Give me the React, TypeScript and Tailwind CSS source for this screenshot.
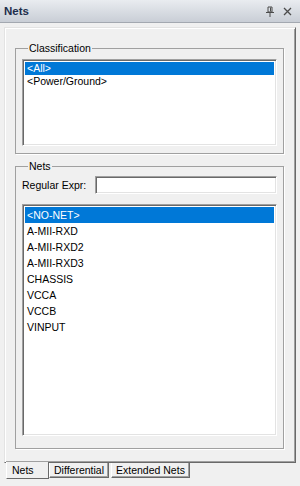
import React from 'react';

const classification = ['<All>', '<Power/Ground>'];
const nets = ['<NO-NET>', 'A-MII-RXD', 'A-MII-RXD2', 'A-MII-RXD3', 'CHASSIS', 'VCCA', 'VCCB', 'VINPUT'];

const sunken =
  'border border-t-[#a0a0a0] border-l-[#a0a0a0] border-r-white border-b-white shadow-[inset_1px_1px_0_#696969,inset_-1px_-1px_0_#e3e3e3] bg-white';

function PinIcon() {
  return (
    <svg width="10" height="11" viewBox="0 0 10 11" className="block">
      <path d="M3 1h4v5H3z" fill="none" stroke="#4b4b4b" strokeWidth="1" />
      <path d="M5.5 1.5v4" stroke="#4b4b4b" strokeWidth="1" />
      <path d="M1 6.5h8" stroke="#4b4b4b" strokeWidth="1" />
      <path d="M5 7v4" stroke="#4b4b4b" strokeWidth="1" />
    </svg>
  );
}

function CloseIcon() {
  return (
    <svg width="9" height="9" viewBox="0 0 9 9" className="block">
      <path d="M1 1l7 7M8 1L1 8" stroke="#4b4b4b" strokeWidth="1.3" />
    </svg>
  );
}

function ListBox({ items, rowH, className }: { items: string[]; rowH: string; className: string }) {
  return (
    <div className={`${sunken} ${className} p-[2px] overflow-hidden`}>
      {items.map((it, i) => (
        <div
          key={it}
          className={`${rowH} flex items-center px-[2px] whitespace-nowrap ${
            i === 0 ? 'bg-[#0078d7] text-white' : 'text-black'
          }`}
        >
          {it}
        </div>
      ))}
    </div>
  );
}

export default function App() {
  return (
    <div className="w-[300px] h-[486px] overflow-hidden bg-[#f0f0f0] text-[10.5px] leading-[13px] text-black font-['Liberation_Sans',Arial,sans-serif] flex flex-col">
      {/* dock title */}
      <div className="h-[23px] shrink-0 flex items-center justify-between pl-[4px] pr-[8px] bg-gradient-to-b from-[#e9ecf0] to-[#c9ced6] border-b border-[#a3a8b0]">
        <span className="text-[11.5px] font-bold text-[#1e2e4c]">Nets</span>
        <div className="flex items-center gap-[8px]">
          <PinIcon />
          <CloseIcon />
        </div>
      </div>

      <div className="pt-[4px] pl-[4px]">
        <div className="w-[292px] h-[436px] border border-t-[#e3e3e3] border-l-[#e3e3e3] border-r-[#696969] border-b-[#696969] shadow-[inset_1px_1px_0_#fff,inset_-1px_-1px_0_#a0a0a0] flex flex-col">
          <fieldset className="ml-[10px] mt-[14px] w-[269px] border border-[#a0a0a0] shadow-[1px_1px_0_#fff] px-[6px] pt-[4px] pb-[7px]">
            <legend className="ml-[6px] px-[1px]">Classification</legend>
            <ListBox items={classification} rowH="h-[13px]" className="h-[87px]" />
          </fieldset>

          <fieldset className="ml-[10px] mt-[6px] w-[269px] border border-[#a0a0a0] shadow-[1px_1px_0_#fff] px-[6px] pt-[3px] pb-[12px]">
            <legend className="ml-[6px] px-[1px]">Nets</legend>
            <div className="flex items-center justify-between">
              <span>Regular Expr:</span>
              <div className={`${sunken} w-[182px] h-[18px]`} />
            </div>
            <ListBox items={nets} rowH="h-[16px]" className="mt-[10px] h-[232px]" />
          </fieldset>
        </div>
      </div>

      {/* bottom tabs */}
      <div className="flex items-start pl-[6px]">
        <div className="w-[43px] h-[17px] -mt-[1px] bg-[#f0f0f0] border-l border-l-white border-r border-r-[#696969] border-b border-b-[#696969] flex items-end pl-[5px] pb-[1px]">
          Nets
        </div>
        <div className="h-[15px] px-[4px] flex items-center border-l border-l-white border-r border-r-[#696969] border-b border-b-[#696969] shadow-[inset_-1px_-1px_0_#a0a0a0]">
          Differential
        </div>
        <div className="ml-[2px] h-[15px] px-[4px] flex items-center border-l border-l-white border-r border-r-[#696969] border-b border-b-[#696969] shadow-[inset_-1px_-1px_0_#a0a0a0]">
          Extended Nets
        </div>
      </div>
    </div>
  );
}
